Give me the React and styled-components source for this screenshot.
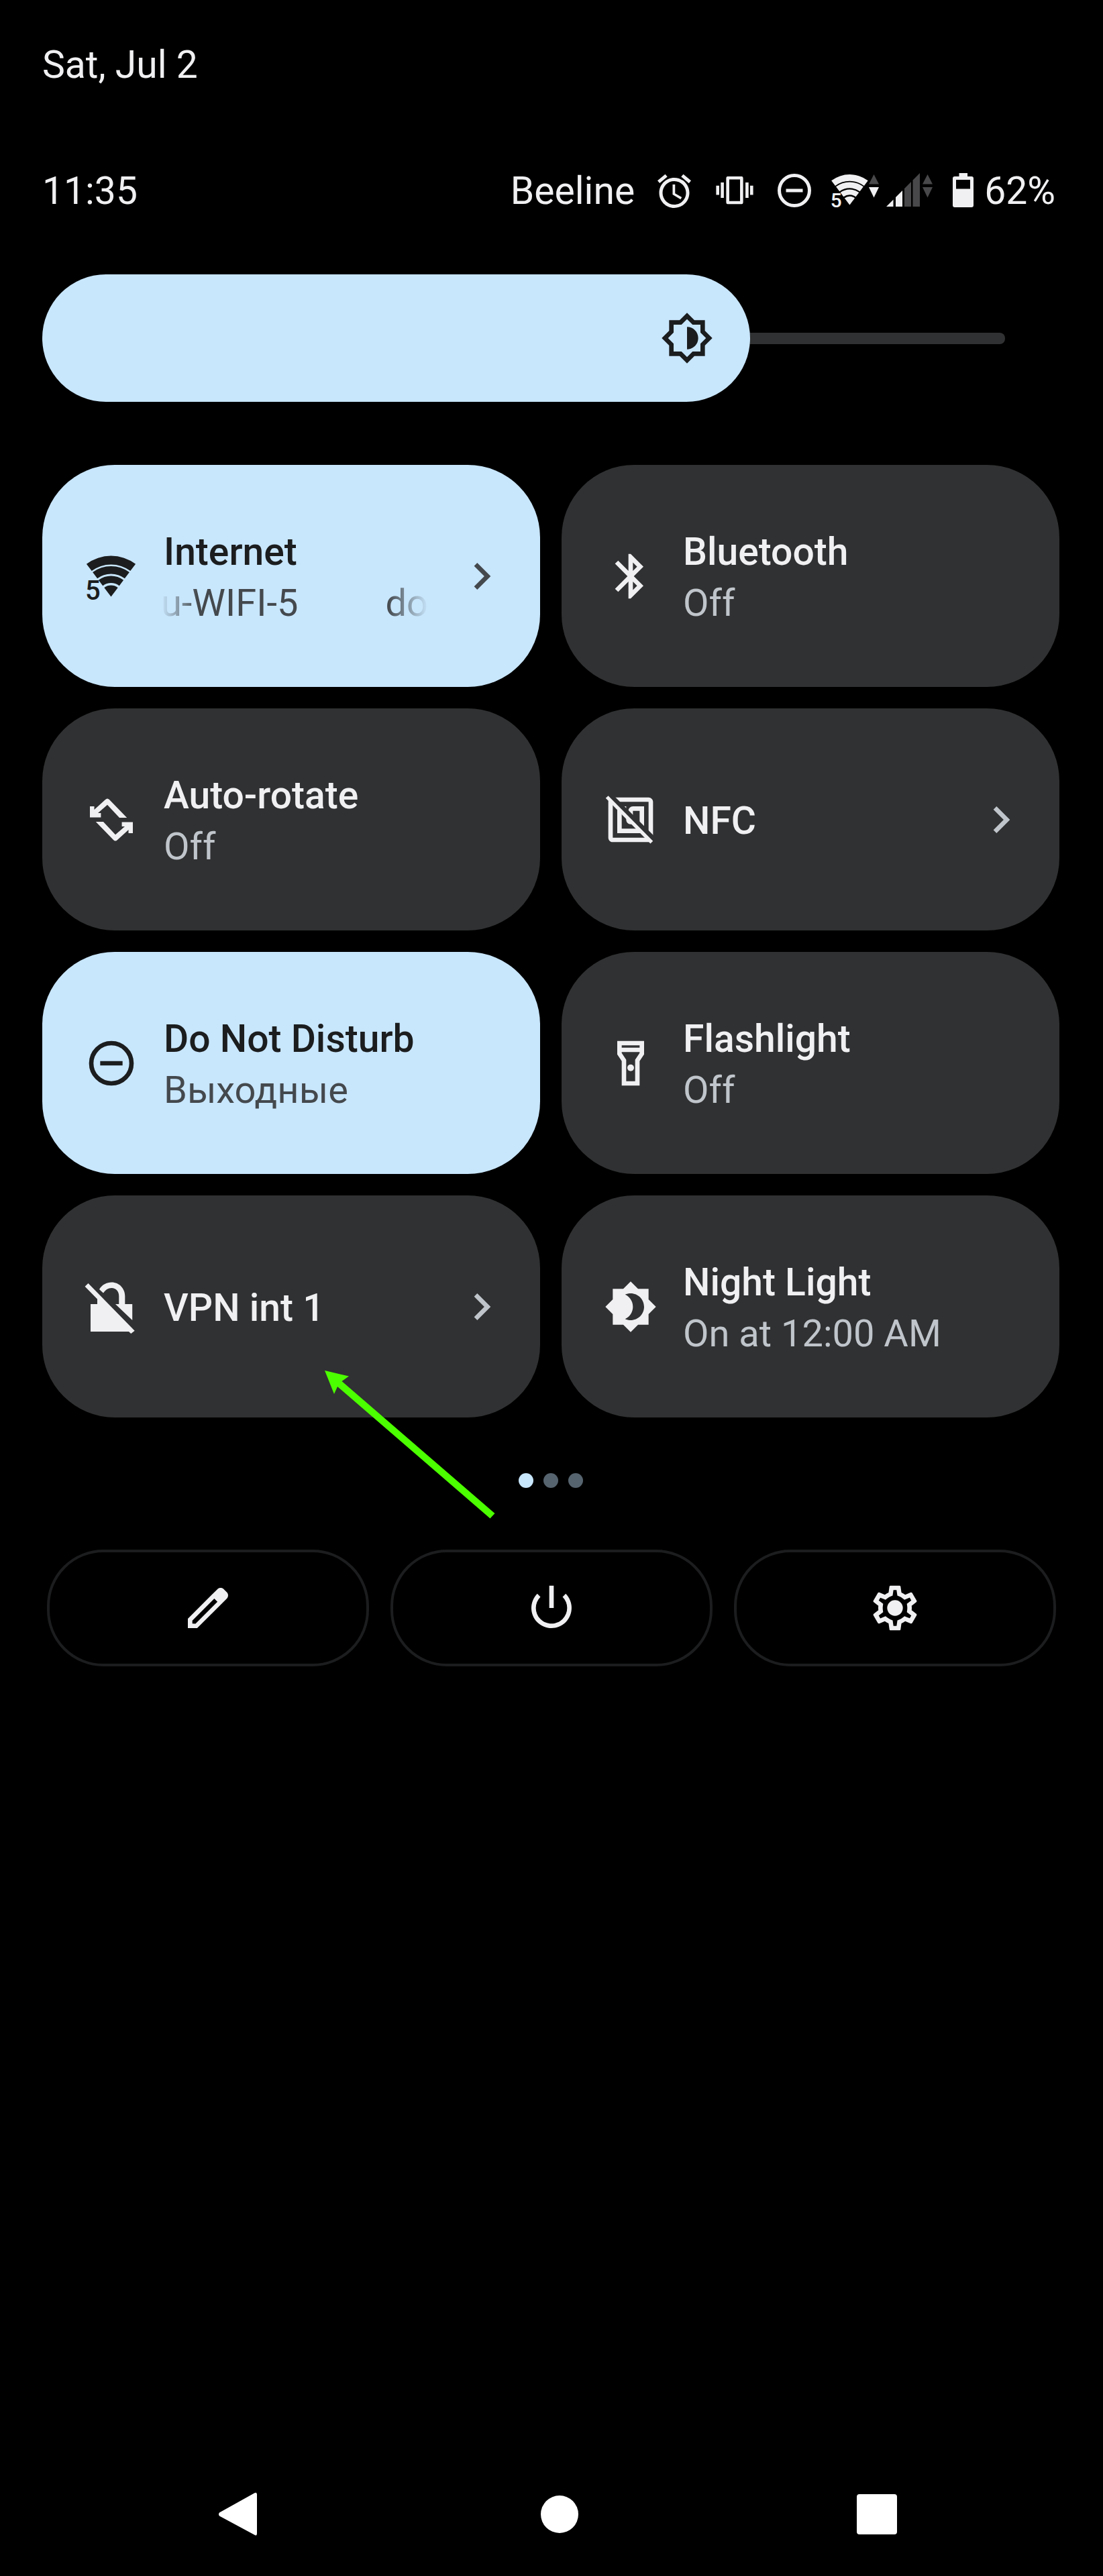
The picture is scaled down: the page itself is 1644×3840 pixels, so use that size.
import React, { useState } from "react";
import styled, { createGlobalStyle } from "styled-components";

const color = {
  ink: "#f0f0f2",
  inkMuted: "#bfc5cb",
  accent: "#c8e6fc",
  onAccent: "#1b1d1e",
  onAccentMuted: "#44494d",
  tile: "#303132",
  outline: "#1c1d1e",
  dim: "#48484a",
  dot: "#56646f",
};

const GlobalStyle = createGlobalStyle`
  *, *::before, *::after { box-sizing: border-box; }
  body {
    margin: 0;
    background: #000;
    color: ${color.ink};
    font-family: Roboto, "Noto Sans", sans-serif;
  }
  button {
    margin: 0;
    padding: 0;
    border: 0;
    background: none;
    color: inherit;
    font: inherit;
    cursor: pointer;
  }
`;

const Screen = styled.main`
  display: flex;
  flex-direction: column;
  min-height: 100vh;
`;

const Shade = styled.div`
  display: flex;
  flex-direction: column;
  padding: 64px 65px 0 63px;
`;

const DateLine = styled.div`
  font-size: 57px;
  line-height: 66px;
`;

const StatusBar = styled.header`
  display: flex;
  align-items: center;
  justify-content: space-between;
  height: 80px;
  margin-top: 115px;
  padding-right: 6px;
  font-size: 57px;
  line-height: 66px;
`;

const StatusGroup = styled.div`
  display: flex;
  align-items: center;
  gap: ${(p) => p.$gap}px;
`;

const StatusSvg = styled.svg`
  display: block;
  flex: none;
  width: ${(p) => p.$width || 70}px;
  height: 60px;
  overflow: visible;
`;

const Brightness = styled.div`
  display: grid;
  align-items: center;
  height: 190px;
  margin: 84px 81px 0 0;
  > * { grid-area: 1 / 1; }
`;

const BrightnessTrack = styled.div`
  height: 17px;
  border-radius: 8px;
  background: ${color.tile};
`;

const BrightnessFill = styled.div`
  display: flex;
  align-items: center;
  justify-content: flex-end;
  height: 190px;
  min-width: 190px;
  padding-right: 54px;
  border-radius: 95px;
  background: ${color.accent};
  color: ${color.onAccent};
`;

const BrightnessInput = styled.input`
  width: 100%;
  height: 100%;
  margin: 0;
  opacity: 0;
  cursor: pointer;
`;

const Tiles = styled.section`
  display: grid;
  grid-template-columns: repeat(2, minmax(0, 1fr));
  gap: 32px;
  margin-top: 94px;
`;

const TileCell = styled.div`
  position: relative;
  display: flex;
`;

const Tile = styled.button`
  display: flex;
  flex: 1;
  align-items: center;
  min-width: 0;
  height: 331px;
  && { padding: 0 47px 0 63px; }
  border-radius: 108px;
  text-align: left;
  && {
    background: ${(p) => (p.$on ? color.accent : color.tile)};
    color: ${(p) => (p.$on ? color.onAccent : color.ink)};
  }
`;

const Icon = styled.svg`
  display: block;
  flex: none;
  width: 80px;
  height: 80px;
  overflow: visible;
`;

const TileText = styled.span`
  display: flex;
  flex: 1;
  flex-direction: column;
  min-width: 0;
  margin: 0 40px 0 38px;
  padding-top: 5px;
  font-size: 56px;
  line-height: 76px;
  white-space: nowrap;
`;

const TileTitle = styled.span`
  font-size: 57px;
  font-weight: 500;
`;

const TileState = styled.span`
  color: ${(p) => (p.$on ? color.onAccentMuted : color.inkMuted)};
`;

const Marquee = styled.span`
  display: flex;
  justify-content: space-between;
  margin-left: -4px;
  color: ${color.onAccentMuted};
  mask-image: linear-gradient(to right, transparent, #000 54px, #000 calc(100% - 60px), transparent);
`;

const Chevron = styled(Icon)`
  color: ${(p) => (p.$on ? color.onAccentMuted : color.inkMuted)};
`;

const Pointer = styled.svg`
  position: absolute;
  z-index: 1;
  left: 421px;
  top: 261px;
  width: 256px;
  height: 222px;
  pointer-events: none;
`;

const Pages = styled.div`
  display: flex;
  justify-content: center;
  gap: 15px;
  margin-top: 83px;
`;

const PageDot = styled.span`
  width: 22px;
  height: 22px;
  border-radius: 50%;
  background: ${(p) => (p.$current ? color.accent : color.dot)};
`;

const Actions = styled.section`
  display: grid;
  grid-template-columns: repeat(3, minmax(0, 1fr));
  gap: 32px;
  margin: 92px 5px 0 7px;
`;

const ActionButton = styled.button`
  display: flex;
  align-items: center;
  justify-content: center;
  height: 174px;
  && { border: 4px solid ${color.outline}; }
  border-radius: 84px;
`;

const NavBar = styled.nav`
  display: flex;
  align-items: center;
  height: 184px;
  margin-top: auto;
  padding: 0 96px 0 120px;
  color: #fff;
`;

const NavButton = styled.button`
  display: flex;
  flex: 1;
  justify-content: center;
`;

/* Circular band of the Wi-Fi fan, centred on the origin. */
const band = (outer, inner) => {
  const x1 = outer * 0.6, y1 = outer * 0.8, x2 = inner * 0.6, y2 = inner * 0.8;
  return `M${-x1} ${-y1}A${outer} ${outer} 0 0 1 ${x1} ${-y1}L${x2} ${-y2}A${inner} ${inner} 0 0 0 ${-x2} ${-y2}Z`;
};

const WifiGlyph = () => (
  <>
    <g transform="translate(39.5 70.5)">
      <path d={band(61, 48)} />
      <path d={band(45.6, 34)} />
      <path d={band(31, 20.4)} />
      <path d="M-10.2 -13.6A17 17 0 0 1 10.2 -13.6L0 0Z" />
    </g>
    <text x="1" y="75" fontSize="40" fontWeight="500" fontFamily="Roboto, sans-serif">5</text>
  </>
);

const WifiIcon = () => (
  <Icon viewBox="0 0 80 80" fill="currentColor" aria-hidden="true"><WifiGlyph /></Icon>
);

const PathIcon = ({ d, children }) => (
  <Icon viewBox="0 0 24 24" fill="currentColor" aria-hidden="true">
    {d && <path d={d} />}
    {children}
  </Icon>
);

const BluetoothIcon = () => (
  <PathIcon d="M17.71 7.71L12 2h-1v7.59L6.41 5 5 6.41 10.59 12 5 17.59 6.41 19 11 14.41V22h1l5.71-5.71-4.3-4.29 4.3-4.29zM13 5.83l1.88 1.88L13 9.59V5.83zm1.88 10.46L13 18.17v-3.76l1.88 1.88z" />
);

const rotateHalf = "M63.2 37L37 10Q34 7 31 10L14.5 25V20H8V36.6H24.4V30H20L34 17.8L52 37Z";
const RotateIcon = () => (
  <Icon viewBox="0 0 80 80" fill="currentColor" aria-hidden="true">
    <path d={rotateHalf} />
    <path d={rotateHalf} transform="rotate(180 40 40)" />
  </Icon>
);

const NfcOffIcon = () => (
  <PathIcon>
    <mask id="nfc-gap">
      <rect width="24" height="24" fill="#fff" />
      <path d="M0 -1.4L26 24.6" stroke="#000" strokeWidth="2.6" />
    </mask>
    <path
      mask="url(#nfc-gap)"
      d="M20 2H4c-1.1 0-2 .9-2 2v16c0 1.1.9 2 2 2h16c1.1 0 2-.9 2-2V4c0-1.1-.9-2-2-2zm0 18H4V4h16v16zM18 6h-5c-1.1 0-2 .9-2 2v2.28c-.6.35-1 .98-1 1.72 0 1.1.9 2 2 2s2-.9 2-2c0-.74-.4-1.38-1-1.72V8h3v8H8V8h2V6H6v12h12V6z"
    />
    <path d="M1.4 1.8L21.4 22.1" fill="none" stroke="currentColor" strokeWidth="1.6" />
  </PathIcon>
);

const DndGlyph = () => (
  <>
    <circle cx="12" cy="12" r="9" fill="none" stroke="currentColor" strokeWidth="2" />
    <path d="M7 11h10v2H7z" />
  </>
);

const FlashlightIcon = () => (
  <PathIcon d="M6 2v6l2 3v11h8V11l2-3V2H6zm10 2v1H8V4h8zm-2 6.4V20h-4v-9.61l-2-3V7h8v.39l-2 3.01z">
    <circle cx="12" cy="14" r="1.5" />
  </PathIcon>
);

const VpnOffIcon = () => (
  <Icon viewBox="0 0 80 80" fill="currentColor" aria-hidden="true">
    <path d="M5.5 5L74.7 75.7L69.2 80L66 77H9V36H19V28.6L0.6 9.7Z" />
    <path d="M22 14C26 7 33 3.5 40.4 3.5C51.5 3.5 60.3 12.5 60.3 24V36H71.2V60L46 36H51.3V24C51.3 17 47 12 40.4 12C35 12 31 15 28 19.5Z" />
  </Icon>
);

const NightIcon = () => (
  <PathIcon d="M20 8.69V4h-4.69L12 .69 8.69 4H4v4.69L.69 12 4 15.31V20h4.69L12 23.31 15.31 20H20v-4.69L23.31 12 20 8.69zM12 18c-.89 0-1.74-.2-2.5-.55C11.56 16.5 13 14.42 13 12s-1.44-4.5-3.5-5.45C10.26 6.2 11.11 6 12 6c3.31 0 6 2.69 6 6s-2.69 6-6 6z" />
);

const tiles = [
  { title: "Internet", icon: <WifiIcon />, on: true, more: true, marquee: ["u-WIFI-5", "do"] },
  { title: "Bluetooth", icon: <BluetoothIcon />, state: "Off" },
  { title: "Auto-rotate", icon: <RotateIcon />, state: "Off" },
  { title: "NFC", icon: <NfcOffIcon />, more: true },
  { title: "Do Not Disturb", icon: <PathIcon><DndGlyph /></PathIcon>, on: true, state: "Выходные" },
  { title: "Flashlight", icon: <FlashlightIcon />, state: "Off" },
  { title: "VPN int 1", icon: <VpnOffIcon />, more: true, pointed: true },
  { title: "Night Light", icon: <NightIcon />, state: "On at 12:00 AM" },
];

const actions = [
  {
    label: "Edit",
    icon: (
      <PathIcon d="M20.41 4.94l-1.35-1.35c-.78-.78-2.05-.78-2.83 0L13.4 6.41 3 16.82V21h4.18l10.46-10.46 2.77-2.77c.79-.77.79-2.05 0-2.83zM6.41 19.06L5 19v-1.36l9.82-9.82 1.41 1.41-9.82 9.83z" />
    ),
  },
  {
    label: "Power",
    icon: (
      <PathIcon d="M11 2h2v10h-2zM18.37 5.64l-1.41 1.41c2.73 2.73 2.72 7.16-.01 9.89-2.73 2.73-7.17 2.73-9.89.01-2.73-2.73-2.74-7.18-.01-9.91L5.64 5.64c-3.5 3.5-3.51 9.21-.01 12.72 3.5 3.51 9.22 3.52 12.73.01 3.51-3.51 3.53-9.21.01-12.73z" />
    ),
  },
  {
    label: "Settings",
    icon: (
      <PathIcon d="M19.43 12.98c.04-.32.07-.64.07-.98 0-.34-.03-.66-.07-.98l2.11-1.65c.19-.15.24-.42.12-.64l-2-3.46c-.09-.16-.26-.25-.44-.25-.06 0-.12.01-.17.03l-2.49 1c-.52-.4-1.08-.73-1.69-.98l-.38-2.65C14.46 2.18 14.25 2 14 2h-4c-.25 0-.46.18-.49.42l-.38 2.65c-.61.25-1.17.59-1.69.98l-2.49-1c-.06-.02-.12-.03-.18-.03-.17 0-.34.09-.43.25l-2 3.46c-.13.22-.07.49.12.64l2.11 1.65c-.04.32-.07.65-.07.98 0 .33.03.66.07.98l-2.11 1.65c-.19.15-.24.42-.12.64l2 3.46c.09.16.26.25.44.25.06 0 .12-.01.17-.03l2.49-1c.52.4 1.08.73 1.69.98l.38 2.65c.03.24.24.42.49.42h4c.25 0 .46-.18.49-.42l.38-2.65c.61-.25 1.17-.59 1.69-.98l2.49 1c.06.02.12.03.18.03.17 0 .34-.09.43-.25l2-3.46c.12-.22.07-.49-.12-.64l-2.11-1.65zm-1.98-1.71c.04.31.05.52.05.73 0 .21-.02.43-.05.73l-.14 1.13.89.7 1.08.84-.7 1.21-1.27-.51-1.04-.42-.9.68c-.43.32-.84.56-1.25.73l-1.06.43-.16 1.13-.2 1.35h-1.4l-.19-1.35-.16-1.13-1.06-.43c-.43-.18-.83-.41-1.23-.71l-.91-.7-1.06.43-1.27.51-.7-1.21 1.08-.84.89-.7-.14-1.13c-.03-.31-.05-.54-.05-.74s.02-.43.05-.73l.14-1.13-.89-.7-1.08-.84.7-1.21 1.27.51 1.04.42.9-.68c.43-.32.84-.56 1.25-.73l1.06-.43.16-1.13.2-1.35h1.39l.19 1.35.16 1.13 1.06.43c.43.18.83.41 1.23.71l.91.7 1.06-.43 1.27-.51.7 1.21-1.07.85-.89.7.14 1.13z">
        <circle cx="12" cy="12" r="3.5" />
      </PathIcon>
    ),
  },
];

const navItems = [
  { label: "Back", shape: <path d="M9 37.5L61 8.5Q65 6.5 65 10.5V68.5Q65 73 61 70.5L9 42.5Q7 40 9 37.5Z" /> },
  { label: "Home", shape: <circle cx="40" cy="40" r="28" /> },
  { label: "Recent apps", shape: <rect x="7" y="10" width="60" height="60" rx="4" /> },
];

function StatusIcons() {
  return (
    <StatusGroup $gap={24}>
      <span>Beeline</span>
      <StatusGroup $gap={20}>
        <StatusSvg viewBox="0 0 70 60" fill="currentColor" role="img" aria-label="Alarm set">
          <path transform="translate(5 0) scale(2.5)" d="M22 5.72l-4.6-3.86-1.29 1.53 4.6 3.86L22 5.72zM7.88 3.39L6.6 1.86 2 5.71l1.29 1.53 4.59-3.85zM12.5 8H11v6l4.75 2.85.75-1.23-4-2.37V8zM12 4c-4.97 0-9 4.03-9 9s4.02 9 9 9c4.97 0 9-4.03 9-9s-4.03-9-9-9zm0 16c-3.87 0-7-3.13-7-7s3.13-7 7-7 7 3.13 7 7-3.13 7-7 7z" />
        </StatusSvg>
        <StatusSvg viewBox="0 0 70 60" fill="currentColor" role="img" aria-label="Vibrate">
          <path transform="translate(7.4 1) scale(2.3)" d="M0 15h2V9H0v6zm3 2h2V7H3v10zm19-8v6h2V9h-2zm-3 8h2V7h-2v10zM16.5 3h-9C6.67 3 6.5 3.67 6.5 4.5v15c0 .83.17 1.5 1 1.5h9c.83 0 1-.67 1-1.5v-15c0-.83-.17-1.5-1-1.5zM15.5 19h-7V5h7v14z" />
        </StatusSvg>
        <StatusSvg viewBox="0 0 70 60" fill="currentColor" role="img" aria-label="Do Not Disturb">
          <g transform="translate(4 -1) scale(2.5)"><DndGlyph /></g>
        </StatusSvg>
        <StatusGroup $gap={10}>
          <StatusSvg viewBox="0 0 70 60" fill="currentColor" role="img" aria-label="Wi-Fi 5">
            <g transform="translate(-3 -2) scale(.745)"><WifiGlyph /></g>
            <path d="M55 19.5L62.5 5L70 19.5Z" fill={color.dim} />
            <path d="M55 24L62.5 39.5L70 24Z" />
          </StatusSvg>
          <StatusSvg viewBox="0 0 70 60" fill="currentColor" role="img" aria-label="Mobile signal">
            <path d="M1 53L11.5 42.5V53ZM15 53V39L25 29V53Z" />
            <path d="M28 53V26L38 16V53ZM40.5 53V13.5L51 3V53ZM55 19.5L62.5 5L70 19.5ZM55 24L62.5 39.5L70 24Z" fill={color.dim} />
          </StatusSvg>
        </StatusGroup>
        <StatusGroup $gap={7}>
          <StatusSvg $width={50} viewBox="0 0 50 60" fill="currentColor" role="img" aria-label="Battery">
            <path fillRule="evenodd" d="M19.5 3H32V8H38Q41 8 41 11V51Q41 54 38 54H13Q10 54 10 51V11Q10 8 13 8H19.5ZM15 13V26.5H36V13Z" />
          </StatusSvg>
          <span>62%</span>
        </StatusGroup>
      </StatusGroup>
    </StatusGroup>
  );
}

function BrightnessSlider() {
  const [level, setLevel] = useState(735);
  return (
    <Brightness>
      <BrightnessTrack />
      <BrightnessFill style={{ width: `${level / 10}%` }}>
        <PathIcon d="M20 8.69V4h-4.69L12 .69 8.69 4H4v4.69L.69 12 4 15.31V20h4.69L12 23.31 15.31 20H20v-4.69L23.31 12 20 8.69zm-2 5.79V18h-3.52L12 20.48 9.52 18H6v-3.52L3.52 12 6 9.52V6h3.52L12 3.52 14.48 6H18v3.52L20.48 12 18 14.48zM12 7v10c2.76 0 5-2.24 5-5s-2.24-5-5-5z" />
      </BrightnessFill>
      <BrightnessInput
        type="range"
        min="0"
        max="1000"
        value={level}
        onChange={(e) => setLevel(Number(e.target.value))}
        aria-label="Display brightness"
      />
    </Brightness>
  );
}

function QuickTile({ title, icon, on, state, marquee, more, pointed }) {
  return (
    <TileCell>
      <Tile type="button" $on={on} aria-pressed={!!on}>
        {icon}
        <TileText>
          <TileTitle>{title}</TileTitle>
          {state && <TileState $on={on}>{state}</TileState>}
          {marquee && <Marquee>{marquee.map((part) => <span key={part}>{part}</span>)}</Marquee>}
        </TileText>
        {more && (
          <Chevron $on={on} viewBox="0 0 24 24" fill="currentColor" aria-hidden="true">
            <path d="M10 6L8.59 7.41 13.17 12l-4.58 4.59L10 18l6-6z" />
          </Chevron>
        )}
      </Tile>
      {pointed && (
        <Pointer viewBox="0 0 256 222" fill="#4cff00" aria-hidden="true">
          <path d="M0 0L36 8.5L25.5 16L253.5 213L246.5 220.5L19 24L14 35Z" />
        </Pointer>
      )}
    </TileCell>
  );
}

export default function App() {
  return (
    <Screen>
      <GlobalStyle />
      <Shade>
        <DateLine>Sat, Jul 2</DateLine>
        <StatusBar>
          <span>11:35</span>
          <StatusIcons />
        </StatusBar>
        <BrightnessSlider />
        <Tiles>
          {tiles.map((tile) => <QuickTile key={tile.title} {...tile} />)}
        </Tiles>
        <Pages>
          <PageDot $current />
          <PageDot />
          <PageDot />
        </Pages>
        <Actions>
          {actions.map(({ label, icon }) => (
            <ActionButton key={label} type="button" aria-label={label}>{icon}</ActionButton>
          ))}
        </Actions>
      </Shade>
      <NavBar>
        {navItems.map(({ label, shape }) => (
          <NavButton key={label} type="button" aria-label={label}>
            <Icon viewBox="0 0 80 80" fill="currentColor" aria-hidden="true">{shape}</Icon>
          </NavButton>
        ))}
      </NavBar>
    </Screen>
  );
}
